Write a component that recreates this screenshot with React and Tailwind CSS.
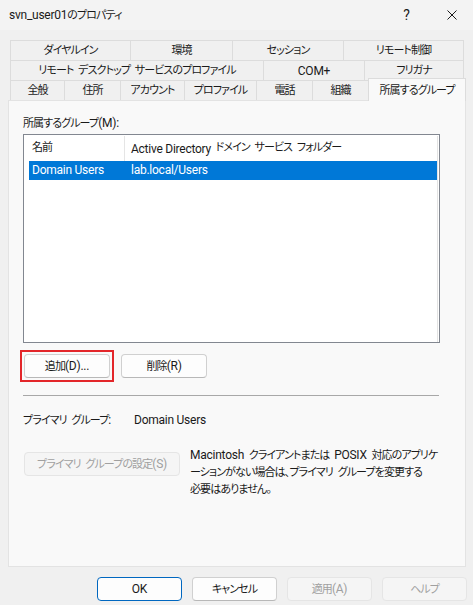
import React from "react";

const font = {
  fontFamily: "Roboto, 'Noto Sans CJK JP', sans-serif",
};

// word gap inside japanese labels (a plain space gets eaten by the tracking)
const SP = "\u2002";

// latin runs are set a bit larger than the japanese ones
function L({ children }) {
  return <span className="text-[12px] tracking-[-0.25px]">{children}</span>;
}

function Tab({ w, children }) {
  return (
    <div
      className={`${w} h-[20px] flex items-center justify-center border border-b-0 border-[#dcdcdc] -ml-px first:ml-0 bg-[#f0f0f0] text-[#1a1a1a] leading-none whitespace-nowrap`}
    >
      {children}
    </div>
  );
}

function Btn({ w, disabled, primary, children }) {
  let cls = "bg-[#fdfdfd] border-[#d0d0d0] border-b-[#b8b8b8] text-[#1a1a1a]";
  if (disabled) cls = "bg-[#f5f5f5] border-[#e5e5e5] text-[#a0a0a0]";
  if (primary) cls = "bg-[#fdfdfd] border-[#0067c0] text-[#1a1a1a]";
  return (
    <div
      className={`${w} h-[24px] flex items-center justify-center rounded-[4px] border leading-none whitespace-nowrap ${cls}`}
    >
      {children}
    </div>
  );
}

export default function App() {
  return (
    <div
      className="w-[473px] h-[605px] bg-[#f0f0f0] overflow-hidden whitespace-nowrap text-[11px] [font-feature-settings:'palt'] tracking-[-0.9px]"
      style={font}
    >
      {/* title bar */}
      <div className="h-[30px] bg-[#f3f3f3] flex items-center">
        <div className="pl-[9px] text-[#1a1a1a] flex-1">
          <L>svn_user01</L>のプロパティ
        </div>
        <div className="w-[20px] text-center text-[14px] text-[#1a1a1a] mr-[31px]">?</div>
        <svg width="10" height="10" viewBox="0 0 10 10" className="mr-[16px]">
          <path d="M0.5 0.5 L9.5 9.5 M9.5 0.5 L0.5 9.5" stroke="#1a1a1a" strokeWidth="1" />
        </svg>
      </div>

      {/* tabs */}
      <div className="mt-[10px] pl-[10px]">
        <div className="flex">
          <Tab w="w-[121px]">ダイヤルイン</Tab>
          <Tab w="w-[103px]">環境</Tab>
          <Tab w="w-[112px]">セッション</Tab>
          <Tab w="w-[121px]">リモート制御</Tab>
        </div>
        <div className="flex">
          <Tab w="w-[254px]">{`リモート${SP}デスクトップ${SP}サービスのプロファイル`}</Tab>
          <Tab w="w-[102px]">
            <L>COM+</L>
          </Tab>
          <Tab w="w-[100px]">フリガナ</Tab>
        </div>
        <div className="flex items-end h-[22px] -mt-[2px]">
          <Tab w="w-[55px]">全般</Tab>
          <Tab w="w-[57px]">住所</Tab>
          <Tab w="w-[65px]">アカウント</Tab>
          <Tab w="w-[73px]">プロファイル</Tab>
          <Tab w="w-[57px]">電話</Tab>
          <Tab w="w-[57px]">組織</Tab>
          <div className="relative z-10 -ml-px w-[98px] h-[23px] -mb-px flex items-center justify-center border border-b-0 border-[#dcdcdc] bg-[#f9f9f9] text-[#1a1a1a] leading-none">
            所属するグループ
          </div>
        </div>
      </div>

      {/* panel */}
      <div className="ml-[8px] w-[458px] h-[467px] bg-[#f9f9f9] border border-[#e3e3e3] pl-[14px] text-[#1a1a1a]">
        <div className="mt-[14px] h-[16px] leading-[16px]">
          所属するグループ<L>(M):</L>
        </div>
        <div className="mt-[3px] w-[417px] h-[209px] border border-[#828790] bg-white pl-[5px] pt-[1px] flex">
          <div className="w-[409px] border-r border-[#e3e3e3] h-full">
            <div className="h-[25px] flex">
              <div className="w-[95px] pl-[3px] flex items-center">名前</div>
              <div className="border-l border-[#e5e5e5] pl-[6px] flex items-center">
                <L>Active Directory</L>
                {`${SP}ドメイン${SP}サービス${SP}フォルダー`}
              </div>
            </div>
            <div className="h-[19px] bg-[#0078d7] text-white flex items-center">
              <div className="w-[96px] pl-[3px]">
                <L>Domain Users</L>
              </div>
              <div className="pl-[6px]">
                <L>lab.local/Users</L>
              </div>
            </div>
          </div>
        </div>

        <div className="mt-[7px] flex items-center">
          <div className="-ml-[3px] border-2 border-[#e3262a] p-[2px]">
            <Btn w="w-[86px]">
              追加<L>(D)...</L>
            </Btn>
          </div>
          <div className="ml-[7px]">
            <Btn w="w-[86px]">
              削除<L>(R)</L>
            </Btn>
          </div>
        </div>

        <div className="mt-[13px] w-[416px] h-px bg-[#a8a8a8]" />

        <div className="mt-[16px] h-[16px] leading-[16px] flex items-center">
          <div className="w-[111px]">
            {`プライマリ${SP}グループ`}
            <L>:</L>
          </div>
          <L>Domain Users</L>
        </div>

        <div className="mt-[24px] flex items-start">
          <div className="ml-px">
            <Btn w="w-[156px]" disabled>
              {`プライマリ${SP}グループの設定`}
              <L>(S)</L>
            </Btn>
          </div>
          <div className="ml-[10px] -mt-[5px] leading-[17px]">
            <L>Macintosh</L>
            {`${SP}クライアントまたは${SP}`}
            <L>POSIX</L>
            {`${SP}対応のアプリケ`}
            <br />
            {`ーションがない場合は、プライマリ${SP}グループを変更する`}
            <br />
            必要はありません。
          </div>
        </div>
      </div>

      {/* bottom buttons */}
      <div className="mt-[10px] flex justify-end gap-[10px] pr-[6px]">
        <Btn w="w-[85px]" primary>
          <L>OK</L>
        </Btn>
        <Btn w="w-[85px]">キャンセル</Btn>
        <Btn w="w-[85px]" disabled>
          適用<L>(A)</L>
        </Btn>
        <Btn w="w-[85px]" disabled>
          ヘルプ
        </Btn>
      </div>
    </div>
  );
}
